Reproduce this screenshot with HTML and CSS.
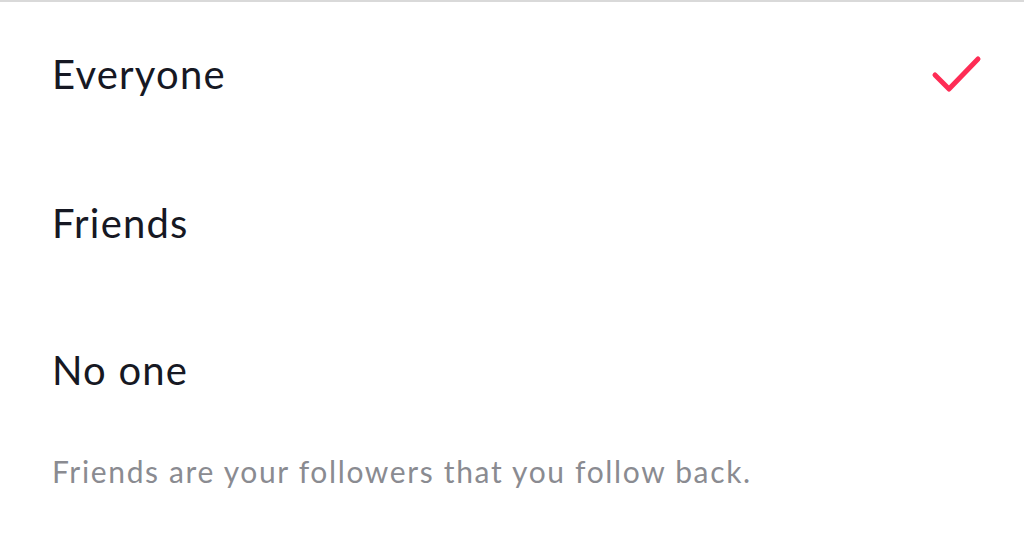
FILE: index.html
```html
<!DOCTYPE html>
<html lang="en">
<head>
<meta charset="utf-8">
<link rel="stylesheet" href="styles.css">
</head>
<body>
<div class="page">
  <ul class="options">
    <li class="option">
      <span class="label">Everyone</span>
      <svg class="check" width="52" height="40" viewBox="0 0 52 40" aria-hidden="true">
        <polyline points="5,21 19,35 48,5" fill="none" stroke="#fe2c55" stroke-width="5" stroke-linecap="round" stroke-linejoin="round"/>
      </svg>
    </li>
    <li class="option"><span class="label">Friends</span></li>
    <li class="option"><span class="label">No one</span></li>
  </ul>
  <p class="note">Friends are your followers that you follow back.</p>
</div>
</body>
</html>
```
FILE: styles.css
```css
html, body {
  margin: 0;
  padding: 0;
  background: #ffffff;
}
body {
  font-family: "Lato", "Noto Sans", sans-serif;
  color: #161823;
}
.page {
  border-top: 2px solid #d9d9d9;
  width: 1024px;
  height: 533px;
}
.options {
  list-style: none;
  margin: 0;
  padding: 0;
}
.option {
  display: flex;
  align-items: center;
  justify-content: space-between;
  height: 147px;
  padding: 0 42px 0 52px;
}
.option:first-child {
  height: 143px;
  padding-bottom: 4px;
}
.label {
  font-size: 40px;
  line-height: 1;
  letter-spacing: 1.2px;
}
.check {
  display: block;
}
.note {
  margin: 0;
  padding: 10px 52px 0;
  font-size: 30px;
  letter-spacing: 1.65px;
  color: #8a8b91;
}
```
